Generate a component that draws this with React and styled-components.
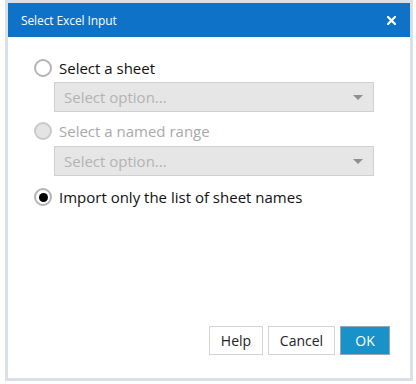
import React from "react";
import styled, { createGlobalStyle } from "styled-components";

const Global = createGlobalStyle`
  html, body { margin: 0; padding: 0; background: #ffffff; }
  body { font-family: "Open Sans", "Noto Sans", sans-serif; }
  * { box-sizing: border-box; }
`;

const Frame = styled.div`
  margin-left: 5px;
  width: 408px;
  height: 381px;
  border: 3px solid #dbe0e8;
  background: #ffffff;
  display: flex;
  flex-direction: column;
`;

const Header = styled.div`
  height: 34px;
  flex: none;
  background: #0e72c9;
  color: #ffffff;
  display: flex;
  align-items: center;
  justify-content: space-between;
  padding: 0 14px 0 13px;
  font-size: 12px;
`;

const Title = styled.span`
  letter-spacing: -0.1px;
`;

const Close = styled.button`
  border: none;
  background: transparent;
  padding: 0;
  width: 10px;
  height: 10px;
  display: flex;
  align-items: center;
  justify-content: center;
  cursor: pointer;
`;

const Body = styled.div`
  flex: 1;
  display: flex;
  flex-direction: column;
  padding: 21px 0 0 26px;
`;

const RadioRow = styled.label`
  display: flex;
  align-items: center;
  gap: 7px;
  height: 20px;
  font-size: 15px;
  color: ${(p) => (p.$disabled ? "#a9a9a9" : "#111111")};
  margin-top: ${(p) => p.$mt || 0}px;
`;

const Circle = styled.span`
  width: 18px;
  height: 18px;
  border-radius: 50%;
  flex: none;
  border: 2px solid ${(p) => (p.$disabled ? "#c9c9c9" : "#b4b4b4")};
  background: ${(p) => (p.$disabled ? "#e4e4e4" : "#ffffff")};
  display: flex;
  align-items: center;
  justify-content: center;
  &::after {
    content: "";
    display: ${(p) => (p.$checked ? "block" : "none")};
    width: 9px;
    height: 9px;
    border-radius: 50%;
    background: #000000;
  }
`;

const Select = styled.div`
  margin: ${(p) => p.$mt}px 0 0 20px;
  width: 320px;
  height: 30px;
  background: #e6e6e6;
  border: 1px solid #d0d0d0;
  display: flex;
  align-items: center;
  justify-content: space-between;
  padding: 0 10px 0 9px;
  font-size: 15px;
  color: #b3b3b3;
`;

const Caret = styled.span`
  width: 0;
  height: 0;
  border-left: 5px solid transparent;
  border-right: 5px solid transparent;
  border-top: 5px solid #8f8f8f;
`;

const Footer = styled.div`
  display: flex;
  justify-content: flex-end;
  gap: 5px;
  padding: 0 20px 23px 0;
`;

const Button = styled.button`
  height: 29px;
  width: ${(p) => p.$w}px;
  padding: 0;
  font-family: inherit;
  font-size: 14px;
  border: 1px solid ${(p) => (p.$primary ? "#9aa6b0" : "#d3d3d3")};
  background: ${(p) => (p.$primary ? "#1892c9" : "#ffffff")};
  color: ${(p) => (p.$primary ? "#ffffff" : "#222222")};
`;

export default function App() {
  return (
    <>
      <Global />
      <Frame>
        <Header>
          <Title>Select Excel Input</Title>
          <Close aria-label="Close">
            <svg width="9" height="9" viewBox="0 0 9 9">
              <path d="M1 1 L8 8 M8 1 L1 8" stroke="#fff" strokeWidth="2.2" strokeLinecap="square" />
            </svg>
          </Close>
        </Header>
        <Body>
          <RadioRow>
            <Circle />
            Select a sheet
          </RadioRow>
          <Select $mt={4}>
            Select option...
            <Caret />
          </Select>
          <RadioRow $disabled $mt={9}>
            <Circle $disabled />
            Select a named range
          </RadioRow>
          <Select $mt={5}>
            Select option...
            <Caret />
          </Select>
          <RadioRow $mt={11}>
            <Circle $checked />
            Import only the list of sheet names
          </RadioRow>
        </Body>
        <Footer>
          <Button $w={54}>Help</Button>
          <Button $w={67}>Cancel</Button>
          <Button $w={50} $primary>OK</Button>
        </Footer>
      </Frame>
    </>
  );
}
